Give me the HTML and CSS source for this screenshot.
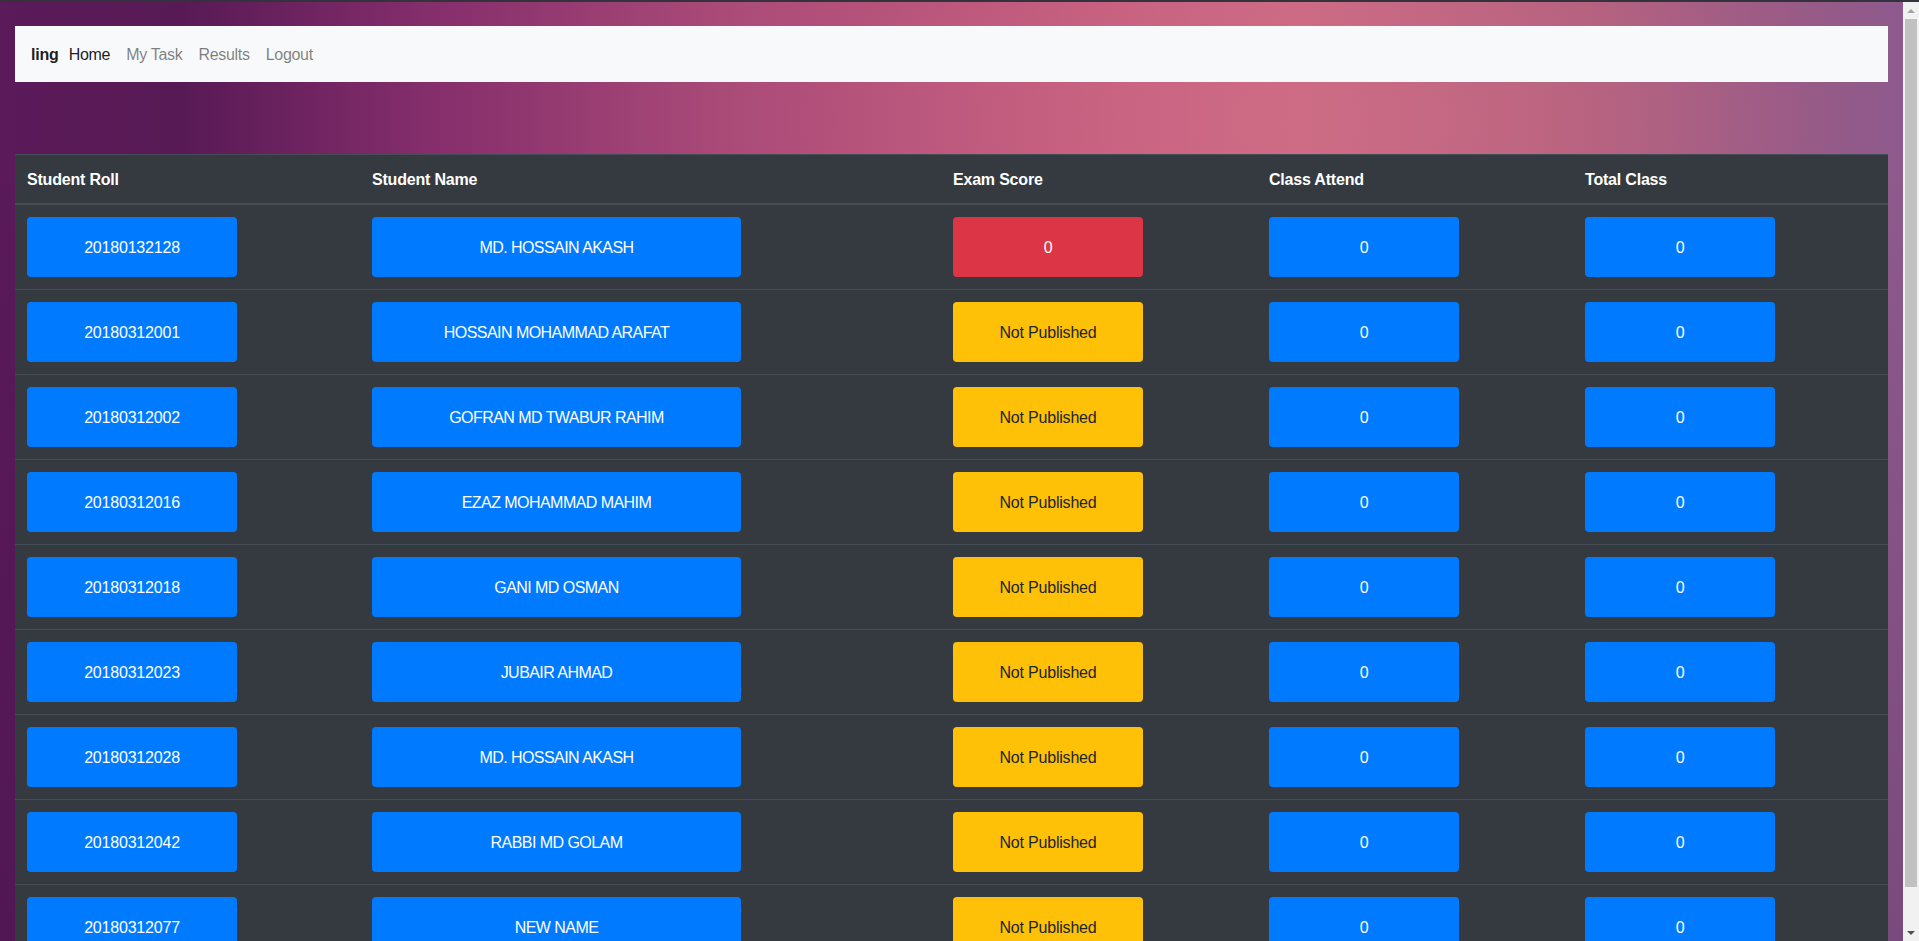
FILE: index.html
```html
<!DOCTYPE html>
<html lang="en">
<head>
<meta charset="utf-8">
<title>Results</title>
<link rel="stylesheet" href="styles.css">
</head>
<body>
<div class="frame">
  <div class="page">
    <div class="container">
      <nav class="navbar">
        <span class="brand">ling</span>
        <a class="nav-link active" href="#">Home</a>
        <a class="nav-link" href="#">My Task</a>
        <a class="nav-link" href="#">Results</a>
        <a class="nav-link" href="#">Logout</a>
      </nav>
      <table class="table">
        <colgroup>
          <col class="c-roll"><col class="c-name"><col class="c-score"><col class="c-attend"><col class="c-total">
        </colgroup>
        <thead>
          <tr><th>Student Roll</th><th>Student Name</th><th>Exam Score</th><th>Class Attend</th><th>Total Class</th></tr>
        </thead>
        <tbody>
          <tr><td><span class="btn blue w-roll">20180132128</span></td><td><span class="btn blue w-name">MD. HOSSAIN AKASH</span></td><td><span class="btn red w-small">0</span></td><td><span class="btn blue w-small">0</span></td><td><span class="btn blue w-small">0</span></td></tr>
          <tr><td><span class="btn blue w-roll">20180312001</span></td><td><span class="btn blue w-name">HOSSAIN MOHAMMAD ARAFAT</span></td><td><span class="btn yellow w-small">Not Published</span></td><td><span class="btn blue w-small">0</span></td><td><span class="btn blue w-small">0</span></td></tr>
          <tr><td><span class="btn blue w-roll">20180312002</span></td><td><span class="btn blue w-name">GOFRAN MD TWABUR RAHIM</span></td><td><span class="btn yellow w-small">Not Published</span></td><td><span class="btn blue w-small">0</span></td><td><span class="btn blue w-small">0</span></td></tr>
          <tr><td><span class="btn blue w-roll">20180312016</span></td><td><span class="btn blue w-name">EZAZ MOHAMMAD MAHIM</span></td><td><span class="btn yellow w-small">Not Published</span></td><td><span class="btn blue w-small">0</span></td><td><span class="btn blue w-small">0</span></td></tr>
          <tr><td><span class="btn blue w-roll">20180312018</span></td><td><span class="btn blue w-name">GANI MD OSMAN</span></td><td><span class="btn yellow w-small">Not Published</span></td><td><span class="btn blue w-small">0</span></td><td><span class="btn blue w-small">0</span></td></tr>
          <tr><td><span class="btn blue w-roll">20180312023</span></td><td><span class="btn blue w-name">JUBAIR AHMAD</span></td><td><span class="btn yellow w-small">Not Published</span></td><td><span class="btn blue w-small">0</span></td><td><span class="btn blue w-small">0</span></td></tr>
          <tr><td><span class="btn blue w-roll">20180312028</span></td><td><span class="btn blue w-name">MD. HOSSAIN AKASH</span></td><td><span class="btn yellow w-small">Not Published</span></td><td><span class="btn blue w-small">0</span></td><td><span class="btn blue w-small">0</span></td></tr>
          <tr><td><span class="btn blue w-roll">20180312042</span></td><td><span class="btn blue w-name">RABBI MD GOLAM</span></td><td><span class="btn yellow w-small">Not Published</span></td><td><span class="btn blue w-small">0</span></td><td><span class="btn blue w-small">0</span></td></tr>
          <tr><td><span class="btn blue w-roll">20180312077</span></td><td><span class="btn blue w-name">NEW NAME</span></td><td><span class="btn yellow w-small">Not Published</span></td><td><span class="btn blue w-small">0</span></td><td><span class="btn blue w-small">0</span></td></tr>
        </tbody>
      </table>
    </div>
  </div>
  <div class="scrollbar">
    <div class="sb-btn"><span class="arrow-up"></span></div>
    <div class="sb-track"><div class="sb-thumb"></div></div>
    <div class="sb-btn"><span class="arrow-down"></span></div>
  </div>
</div>
</body>
</html>
```

FILE: styles.css
```css
html, body {
  margin: 0;
  padding: 0;
  height: 100%;
  overflow: hidden;
}

body {
  box-sizing: border-box;
  border-top: 2px solid #34323d;
  font-family: "Liberation Sans", Arial, sans-serif;
  font-size: 16px;
  line-height: 24px;
  color: #212529;
}

.frame {
  display: flex;
  height: 939px;
}

.page {
  flex: 1;
  overflow: hidden;
  background:
    linear-gradient(to bottom, rgba(40, 10, 60, 0) 0px, rgba(40, 10, 60, 0) 160px, rgba(40, 10, 60, 0.2) 100%),
    radial-gradient(ellipse 520px 200px at 1300px 120px, rgba(210, 112, 136, 0.35), rgba(210, 112, 136, 0) 100%),
    linear-gradient(to right, #5b1a5a 0%, #581a55 9.7%, #852e6c 22.6%, #ab4b78 38.6%, #c65f7f 57.8%, #cc6a84 68.3%, #b3617f 83.6%, #945a88 96.5%, #8e5a8e 100%);
}

.container {
  padding: 24px 15px 0;
}

.navbar {
  display: flex;
  align-items: center;
  height: 56px;
  padding: 1px 16px 0;
  box-sizing: border-box;
  background: #f8f9fa;
}

.brand {
  font-weight: bold;
  color: rgba(0, 0, 0, 0.9);
  margin-right: 2px;
  letter-spacing: -0.2px;
}

.nav-link {
  padding: 0 8px;
  color: rgba(0, 0, 0, 0.5);
  text-decoration: none;
  letter-spacing: -0.3px;
}

.nav-link.active {
  color: rgba(0, 0, 0, 0.9);
}

.table {
  margin-top: 72px;
  width: 100%;
  table-layout: fixed;
  border-collapse: collapse;
  background: #343a40;
  color: #fff;
}

.c-roll { width: 345px; }
.c-name { width: 581px; }
.c-score { width: 316px; }
.c-attend { width: 316px; }
.c-total { width: 315px; }

.table th {
  text-align: left;
  font-weight: bold;
  padding: 13px 12px 11px;
  border-top: 1px solid #454d55;
  border-bottom: 2px solid #454d55;
  vertical-align: bottom;
  letter-spacing: -0.2px;
}

.table td {
  padding: 12px;
  border-top: 1px solid #454d55;
  vertical-align: top;
}

.btn {
  display: flex;
  align-items: center;
  justify-content: center;
  box-sizing: border-box;
  height: 60px;
  padding-top: 2px;
  border-radius: 4px;
  color: #fff;
  white-space: nowrap;
  letter-spacing: -0.2px;
}

.blue { background: #007bff; }
.red { background: #dc3545; }
.yellow { background: #ffc107; color: #212529; }

.w-roll { width: 210px; }
.w-name { width: 369px; letter-spacing: -0.55px; }
.w-small { width: 190px; }

.scrollbar {
  width: 16px;
  display: flex;
  flex-direction: column;
  background: #f1f1f1;
}

.sb-btn {
  height: 17px;
  display: flex;
  align-items: center;
  justify-content: center;
}

.sb-track {
  flex: 1;
  padding: 0 2px 37px;
  display: flex;
}

.sb-thumb {
  flex: 1;
  background: #c1c1c1;
}

.arrow-up {
  width: 0;
  height: 0;
  border-left: 4px solid transparent;
  border-right: 4px solid transparent;
  border-bottom: 4px solid #a3a3a3;
}

.arrow-down {
  width: 0;
  height: 0;
  border-left: 4px solid transparent;
  border-right: 4px solid transparent;
  border-top: 4px solid #505050;
}
```
